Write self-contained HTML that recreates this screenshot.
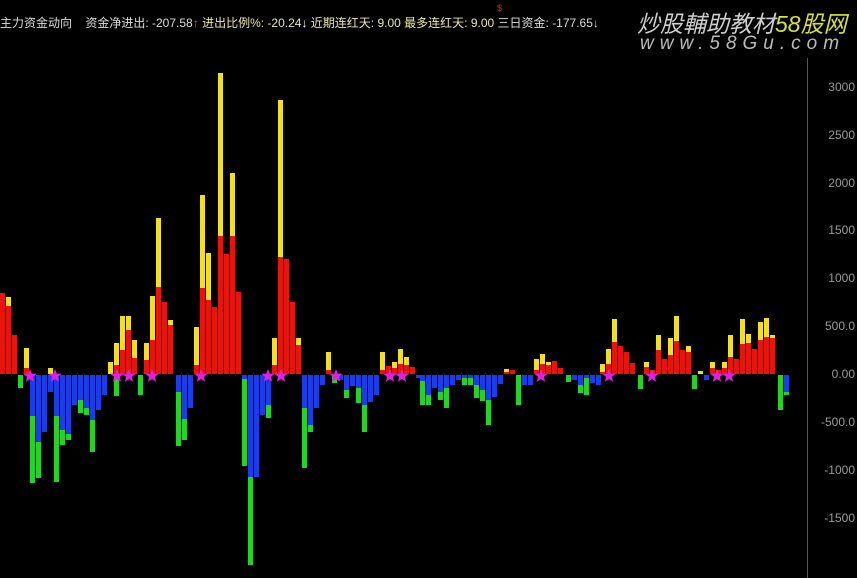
<!DOCTYPE html>
<html><head><meta charset="utf-8"><style>
body{margin:0;background:#000;width:857px;height:578px;overflow:hidden;position:relative;font-family:"Liberation Sans","Noto Sans CJK SC",sans-serif}
#hd{position:absolute;left:0;top:14px;font-size:12px;white-space:nowrap;color:#ddd}
.y{color:#e8e8a0}
.ax{position:absolute;right:2px;font-size:12px;color:#9a9a9a;text-align:right}
#wm{position:absolute;left:637px;top:5px;font-size:23px;font-style:italic;color:#cfcfcf;white-space:nowrap}
#wm2{position:absolute;left:640px;top:33px;font-size:19px;font-style:italic;color:#bbb;letter-spacing:6px;white-space:nowrap;font-family:"Liberation Sans",sans-serif}
</style></head><body>
<div id="hd">主力资金动向&nbsp;&nbsp;&nbsp;&nbsp;资金净进出: -207.58<span style="color:#f44">↑</span> <span class="y">进出比例%: -20.24</span><span style="color:#fff">↓</span> <span class="y">近期连红天: 9.00</span> <span class="y">最多连红天: 9.00</span> 三日资金: -177.65<span style="color:#8fc">↓</span></div>
<div id="wm">炒股輔助教材<span style="color:#d8e040">58股网</span></div>
<div id="wm2">www.58Gu.com</div>
<div style="position:absolute;left:497px;top:3px;color:#c22;font-size:9px">$</div>
<svg id="s" width="857" height="578" style="position:absolute;left:0;top:0">
<line x1="807.5" y1="58" x2="807.5" y2="578" stroke="#555"/>
</svg>
<div class="ax" style="top:80px">3000</div>
<div class="ax" style="top:128px">2500</div>
<div class="ax" style="top:176px">2000</div>
<div class="ax" style="top:223px">1500</div>
<div class="ax" style="top:271px">1000</div>
<div class="ax" style="top:319px">500.0</div>
<div class="ax" style="top:367px">0.00</div>
<div class="ax" style="top:415px">-500.0</div>
<div class="ax" style="top:463px">-1000</div>
<div class="ax" style="top:511px">-1500</div>
<script>
var Z=374;
var D=[[0,0,293],[6,297,306],[12,0,335],[18,0,0,0,388],[24,348,368],[30,0,0,416,483],[36,0,0,442,478],[42,0,0,432],[48,368,0,392],[54,0,0,416,482],[60,0,0,430,445],[66,0,0,434,440],[72,0,0,405],[78,0,0,400,413],[84,0,0,408,415],[90,0,0,420,452],[96,0,0,410],[102,0,0,395],[108,362,0],[114,343,365,0,396],[120,316,350],[126,316,330],[132,340,358],[138,0,0,0,395],[144,343,360],[150,296,340],[156,218,287],[162,0,302],[168,320,325],[176,0,0,392,446],[182,0,0,419,440],[188,0,0,408],[194,327,365],[200,195,288],[206,253,300],[212,0,307],[218,73,236],[224,0,254],[230,173,236],[236,0,292],[242,0,0,379,466],[248,0,0,477,565],[254,0,0,477],[260,0,0,415],[266,0,0,405,418],[272,338,365],[278,100,257],[284,0,259],[290,0,302],[296,338,345],[302,0,0,408,468],[308,0,0,425,432],[314,0,0,408],[320,0,0,385],[326,352,370],[332,0,0,0,383],[338,0,0,380],[344,0,0,390,398],[350,0,0,386],[356,0,0,388,403],[362,0,0,405,432],[368,0,0,402],[374,0,0,395],[380,352,370],[386,0,366],[392,362,368],[398,349,364],[404,357,365],[410,0,367],[416,0,0,378],[420,0,0,381,405],[426,0,0,395,405],[432,0,0,388],[438,0,0,392,400],[444,0,0,388,408],[450,0,0,385],[456,0,0,380],[462,0,0,378,385],[468,0,0,378,385],[474,0,0,385,398],[480,0,0,390,401],[486,0,0,400,425],[492,0,0,397],[498,0,0,384],[504,369,372],[510,0,370],[516,0,0,0,405],[522,0,0,385],[528,0,0,385],[534,359,370],[540,354,364],[546,362,365],[552,0,361],[558,0,368],[566,0,0,0,382],[572,0,0,380],[578,0,0,385,393],[584,0,0,378,395],[590,0,0,383],[596,0,0,385],[600,364,372],[606,349,364],[612,319,342],[618,0,346],[624,0,352],[630,0,363],[638,0,0,0,389],[644,362,367],[650,0,370],[656,335,350],[662,0,359],[668,338,355],[674,316,341],[680,0,350],[686,346,352],[692,0,0,0,389],[698,371,0],[704,0,0,380],[710,362,368],[716,0,370],[722,362,368],[728,335,357],[734,0,359],[740,319,344],[746,334,343],[752,0,349],[758,322,340],[764,318,337],[770,335,338],[778,0,0,0,410],[784,0,0,392,395]];
var S=[30,55,117,129,152,201,268,281,336,390,402,541,609,652,717,729];
var h='';
function r(x,a,b,c){if(b>a)h+='<rect x="'+x+'" y="'+a+'" width="5" height="'+(b-a)+'" fill="'+c+'"/>';}
D.forEach(function(d){var x=d[0],yt=d[1]||0,rt=d[2]||0,bb=d[3]||0,gb=d[4]||0;
if(rt){r(x,rt,Z,'#e8140c');if(yt)r(x,yt,rt,'#f0e020');}else if(yt){r(x,yt,Z,'#f0e020');}
if(bb){r(x,Z+1,bb,'#1a3ee6');if(gb)r(x,bb,gb,'#22d424');}else if(gb){r(x,Z+1,gb,'#22d424');}});
function star(cx,cy){var p=[];for(var i=0;i<10;i++){var a=Math.PI/5*i-Math.PI/2,rr=i%2?3:7;p.push((cx+rr*Math.cos(a)).toFixed(1)+','+(cy+rr*Math.sin(a)).toFixed(1));}h+='<polygon points="'+p.join(' ')+'" fill="#e020e0"/>';}
S.forEach(function(x){star(x,376);});
document.getElementById('s').insertAdjacentHTML('beforeend',h);
</script>
</body></html>
